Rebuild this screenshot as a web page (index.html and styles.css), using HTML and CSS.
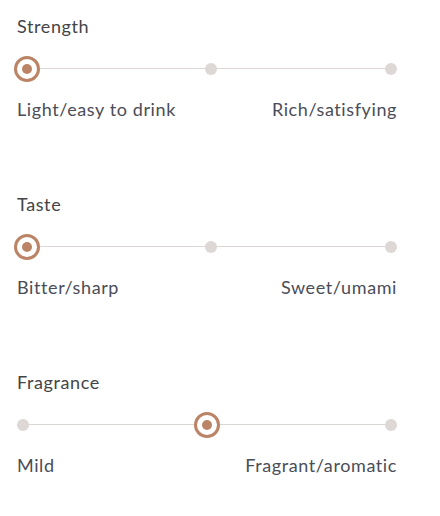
FILE: index.html
```html
<!DOCTYPE html>
<html lang="en">
<head>
    <meta charset="UTF-8">
    <meta name="viewport" content="width=device-width, initial-scale=1.0">
    <title>Tea profile</title>
    <link rel="stylesheet" href="styles.css">
</head>
<body>
    <div class="perfil">
        <div class="secao">
            <div class="titulo">Strength</div>
            <div class="trilha">
                <span class="ponto inicio"></span>
                <span class="ponto meio"></span>
                <span class="ponto fim"></span>
                <span class="marcador no-inicio"></span>
            </div>
            <div class="rotulos">
                <span>Light/easy to drink</span>
                <span>Rich/satisfying</span>
            </div>
        </div>

        <div class="secao">
            <div class="titulo">Taste</div>
            <div class="trilha">
                <span class="ponto inicio"></span>
                <span class="ponto meio"></span>
                <span class="ponto fim"></span>
                <span class="marcador no-inicio"></span>
            </div>
            <div class="rotulos">
                <span>Bitter/sharp</span>
                <span>Sweet/umami</span>
            </div>
        </div>

        <div class="secao">
            <div class="titulo">Fragrance</div>
            <div class="trilha">
                <span class="ponto inicio"></span>
                <span class="ponto meio"></span>
                <span class="ponto fim"></span>
                <span class="marcador no-meio"></span>
            </div>
            <div class="rotulos">
                <span>Mild</span>
                <span>Fragrant/aromatic</span>
            </div>
        </div>
    </div>
</body>
</html>
```

FILE: styles.css
```css
body {
    margin: 0;
    background-color: #ffffff;
    font-family: "Lato", "Open Sans", sans-serif;
}
.perfil {
    padding: 16px 43px 0 17px;
    display: flex;
    flex-direction: column;
    gap: 75px;
}
.titulo {
    font-size: 18px;
    line-height: 20px;
    letter-spacing: 0.6px;
    color: #444446;
}
.trilha {
    position: relative;
    height: 26px;
    margin: 20px 6px 0 6px;
}
/* linha do slider */
.trilha::before {
    content: "";
    position: absolute;
    left: 0;
    right: 0;
    top: 12px;
    height: 1px;
    background-color: #dcd7d5;
}
.ponto {
    position: absolute;
    top: 7px;
    width: 12px;
    height: 12px;
    margin-left: -6px;
    border-radius: 50%;
    background-color: #ddd8d6;
}
.inicio { left: 0; }
.meio { left: 51%; }
.fim { left: 100%; }
.marcador {
    position: absolute;
    top: 0;
    width: 26px;
    height: 26px;
    margin-left: -13px;
    box-sizing: border-box;
    border: 3px solid #bc8466;
    border-radius: 50%;
    background-color: white;
    display: flex;
    justify-content: center;
    align-items: center;
}
.marcador::after {
    content: "";
    width: 10px;
    height: 10px;
    border-radius: 50%;
    background-color: #bc8466;
}
.no-inicio {
    left: 0;
    margin-left: -9px;
}
.no-meio {
    left: 50%;
}
.rotulos {
    display: flex;
    justify-content: space-between;
    margin-top: 17px;
    font-size: 18px;
    line-height: 20px;
    letter-spacing: 0.6px;
    color: #4a4d58;
}
```
